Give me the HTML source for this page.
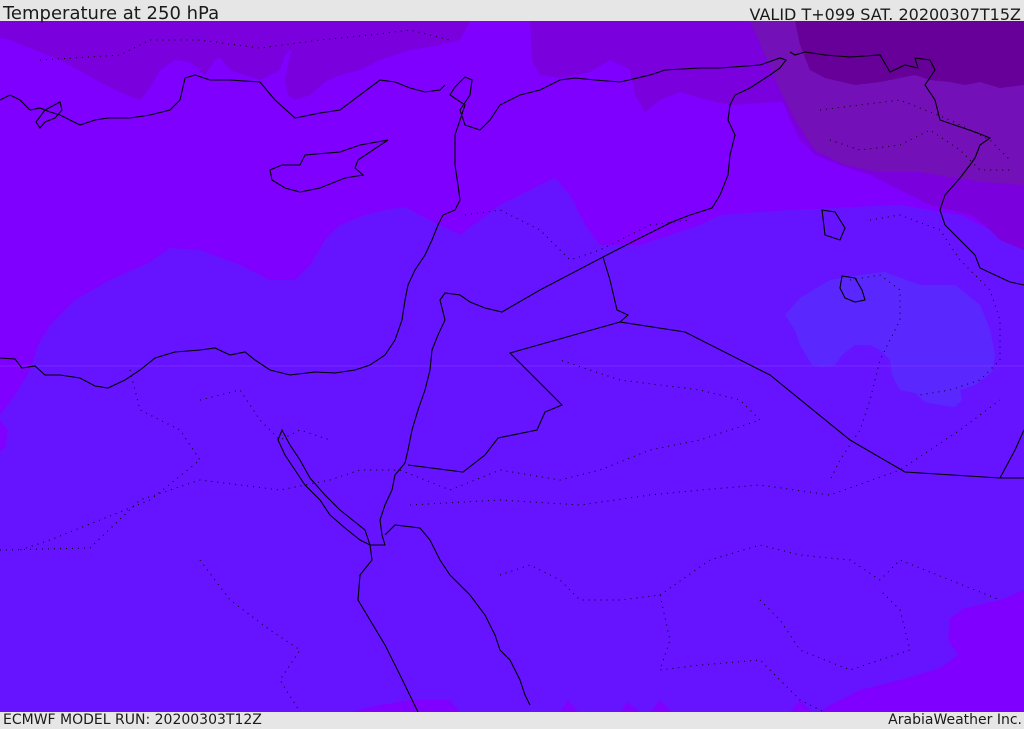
<!DOCTYPE html>
<html><head><meta charset="utf-8"><style>
html,body{margin:0;padding:0;width:1024px;height:729px;overflow:hidden;background:#e6e6e6}
.t{position:absolute;font-family:"DejaVu Sans","Liberation Sans",sans-serif;color:#1a1a1a;white-space:nowrap}
</style></head><body>
<svg width="1024" height="729" style="position:absolute;left:0;top:0" xmlns="http://www.w3.org/2000/svg">
<rect x="0" y="0" width="1024" height="729" fill="#e6e6e6"/>
<svg x="0" y="21" width="1024" height="691" viewBox="0 21 1024 691">
<rect x="0" y="21" width="1024" height="691" fill="#6614ff"/>
<path fill="#7f00ff" d="M0 21 H1024 V240 L990 230 960 215 900 205 850 207 790 210 720 215 700 225 670 235 640 245 600 245 585 225 570 195 555 178 540 185 520 195 500 205 480 220 460 235 440 225 420 215 405 207 385 210 365 215 340 225 325 240 310 265 295 280 270 280 240 265 200 250 170 248 150 262 110 280 75 300 50 325 38 345 30 370 15 395 0 415 Z"/>
<path fill="#7f00ff" d="M0 420 L8 430 5 448 0 452 Z"/>
<path fill="#7f00ff" d="M1024 590 L1000 600 965 608 950 618 948 640 958 655 940 668 900 680 860 690 830 705 820 712 H1024 Z"/>
<path fill="#7f00ff" d="M350 712 L380 705 410 700 450 700 460 712 Z M560 712 L568 700 578 712 Z M620 712 L627 702 640 712 Z M790 712 L800 700 812 712 Z M650 712 L660 700 672 712 Z"/>
<path fill="#7a00dd" d="M0 21 H305 L303 40 285 55 280 70 260 80 230 70 220 58 215 60 205 75 190 62 175 60 160 70 150 88 140 100 120 92 100 82 60 60 30 48 10 40 0 38 Z"/>
<path fill="#7a00dd" d="M305 21 H470 L460 40 440 45 410 50 380 60 360 70 340 75 325 82 310 95 295 100 288 95 285 80 290 55 Z"/>
<path fill="#7a00dd" d="M530 21 H760 L780 60 805 100 730 105 700 98 680 92 660 100 645 112 635 95 630 70 610 60 590 72 560 78 540 75 532 60 Z"/>
<path fill="#7a00dd" d="M760 21 H1024 V250 L1000 240 985 225 970 215 950 210 930 205 900 190 870 175 840 165 815 155 800 140 790 120 778 90 768 60 Z"/>
<path fill="#7410b8" d="M750 21 H1024 V185 L985 182 955 178 920 172 880 172 845 165 815 150 795 120 780 90 765 55 Z"/>
<path fill="#660099" d="M795 21 H1024 V85 L1000 88 980 82 965 85 950 82 930 80 915 75 880 82 855 85 825 78 810 70 800 45 Z"/>
<path fill="#5a28ff" d="M785 315 L800 298 830 280 860 275 885 272 920 285 955 285 980 305 990 330 995 355 992 372 975 385 960 390 962 400 955 407 940 405 925 402 915 393 900 390 892 375 890 360 880 350 870 345 855 345 842 355 835 365 822 367 812 365 800 345 795 330 Z"/>
<line x1="0" y1="366" x2="1024" y2="366" stroke="#8a3dff" stroke-width="1" opacity="0.5"/>
<g fill="none" stroke="#000" stroke-width="1.1">
<path d="M0 358 L15 359 22 368 35 366 45 375 60 375 80 378 95 386 108 388 125 380 140 370 155 358 175 352 200 350 215 348 230 355 245 352 255 360 270 370 290 375 315 372 335 373 355 370 370 365 385 355 395 340 402 320 405 300 408 285 415 270 425 255 432 240 438 225 443 215 455 210 460 200 458 185 455 165 455 150 455 135 460 120 465 105 450 95 455 87 465 77 472 80 470 95 460 110 465 125 480 130 490 120 500 105 510 100 520 95 540 90 560 80 575 78 595 80 620 82 650 75 665 70 700 68 720 68 760 65 780 58 786 60 780 68 770 75 750 88 735 95 730 105 728 120 735 135 730 155 728 175 720 195 712 208 690 215 672 222 640 238 603 257"/>
<path d="M0 100 L10 95 20 100 30 110 40 108 50 112 60 115 80 125 95 120 108 118 130 118 150 115 170 110 180 100 185 78 195 75 210 80 230 80 260 82 275 100 295 118 320 113 340 110 360 95 380 80 395 82 410 88 425 92 440 90 445 85"/>
<path d="M270 170 L282 165 300 165 305 155 340 152 360 145 388 140 370 152 358 160 355 168 363 175 345 178 335 182 320 188 300 192 285 188 272 180 Z"/>
<path d="M36 122 L45 110 60 102 62 110 55 118 45 122 40 128 Z"/>
<path d="M405 463 L395 475 392 490 385 505 380 520 382 535 385 545 370 545 360 540 345 528 330 515 320 500 305 485 295 470 285 455 278 440 282 430 290 445 300 460 310 478 325 495 340 510 355 522 365 530 370 545"/>
<path d="M385 535 L395 525 420 528 430 540 440 560 450 575 470 595 485 615 495 635 500 650 510 660 520 680 525 695 530 705"/>
<path d="M370 545 L372 560 360 575 358 600 370 620 385 645 400 675 418 712"/>
<path d="M790 52 L795 55 805 52 825 55 850 57 880 55 890 72 905 65 918 68 915 58 930 60 935 70 925 85 935 100 940 120 975 132 990 138 980 145 975 158 970 165 960 178 945 195 940 210 945 225 960 240 975 255 980 268 995 275 1010 282 1024 285"/>
<path d="M822 210 L835 212 845 228 840 240 825 235 Z M842 276 L855 278 862 290 865 300 855 302 845 298 840 288 Z"/>
<path d="M405 463 L408 450 412 430 418 410 425 390 430 370 432 350 438 335 445 320 440 300 445 293 460 295 470 302 485 308 502 312 540 290 603 257 610 280 617 310 628 315 620 322 685 332 770 375 850 440 905 472 1000 478 1024 478"/>
<path d="M620 322 L510 353 562 405 545 412 537 430 498 438 485 455 463 472 408 465"/>
<path d="M1024 430 L1015 450 1000 478"/>
</g>
<g fill="none" stroke="#000" stroke-width="1" stroke-dasharray="1 5">
<path d="M0 550 L90 548 140 500 200 480 280 490 330 480 360 470 400 470 450 490 500 470 560 480 600 470 650 450 700 440 760 420 740 400 700 390 620 380 560 360"/>
<path d="M410 505 L500 500 580 505 650 495 700 490 760 485 830 495 900 470 960 430 1000 400"/>
<path d="M500 575 L530 565 560 580 580 600 620 600 660 595 670 640 660 670 700 665 760 660 800 700 830 715"/>
<path d="M660 595 L710 560 760 545 800 555 850 560 880 580 900 560 950 580 1000 600"/>
<path d="M760 600 L780 620 800 650 850 670 880 660 910 650 900 610 880 590"/>
<path d="M130 370 L140 410 180 430 200 460 150 500 100 520 50 540 20 550"/>
<path d="M200 400 L240 390 260 420 280 440 300 430 330 440"/>
<path d="M200 560 L230 600 270 630 300 650 280 680 300 712"/>
<path d="M465 215 L500 210 540 230 570 260 600 250 620 240 650 225 690 220"/>
<path d="M40 60 L120 55 150 40 200 40 260 48 320 40 370 35 410 30 450 40"/>
<path d="M820 110 L900 100 950 120 990 140 1010 160"/>
<path d="M830 140 L860 150 900 145 930 130 960 150 980 170 1010 170"/>
<path d="M870 220 L900 215 940 230 960 260 990 290 1000 320 1000 360 980 380 950 390 920 395"/>
<path d="M850 280 L880 275 900 290 900 320 890 340 880 360 870 400 860 430 840 460 830 480"/>
</g>
</svg>
</svg>
<div class="t" style="left:3px;top:3px;font-size:18px;line-height:21px">Temperature at 250 hPa</div>
<div class="t" style="right:3px;top:5px;font-size:16px;line-height:20px">VALID T+099 SAT. 20200307T15Z</div>
<div class="t" style="left:3px;top:712px;font-size:14px;line-height:17px">ECMWF MODEL RUN: 20200303T12Z</div>
<div class="t" style="right:2px;top:712px;font-size:14px;line-height:17px">ArabiaWeather Inc.</div>
</body></html>
